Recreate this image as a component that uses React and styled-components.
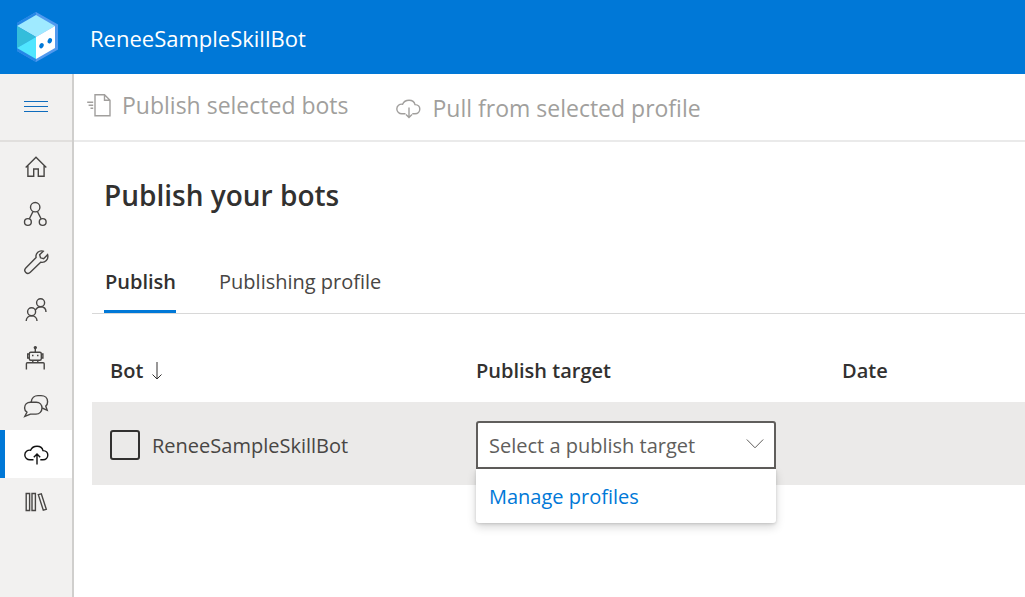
import React from "react";
import styled, { createGlobalStyle } from "styled-components";

const GlobalStyle = createGlobalStyle`
  *, *::before, *::after { box-sizing: border-box; }
  html, body, #root { height: 100%; }
  body {
    margin: 0;
    background: #fff;
    color: #323130;
    font-family: "Open Sans", "Noto Sans", sans-serif;
    font-size: 20px;
    line-height: 28px;
  }
  button, select, input { font: inherit; color: inherit; }
`;

const Shell = styled.div`
  display: flex;
  flex-direction: column;
  min-height: 100%;
  overflow-x: hidden;
`;

const Header = styled.header`
  display: flex;
  align-items: center;
  gap: 28px;
  height: 74px;
  padding: 0 12px;
  background: #0078d7;
  color: #fff;
`;

const ProjectName = styled.span`
  font-size: 22px;
  line-height: 32px;
  padding-top: 2px;
`;

const Body = styled.div`
  display: flex;
  flex: 1;
`;

const Sidebar = styled.nav`
  flex: none;
  width: 74px;
  background: #f2f1f0;
  border-right: 2px solid #d0cfcd;
`;

const MenuButton = styled.button`
  display: flex;
  align-items: center;
  justify-content: center;
  width: 100%;
  height: 68px;
  padding: 0 0 2px;
  border: 0;
  border-bottom: 2px solid #e1dfdd;
  background: none;
  color: #0f6cbd;
`;

const NavList = styled.ul`
  margin: 0;
  padding: 0;
  list-style: none;
`;

const NavLink = styled.a`
  display: flex;
  align-items: center;
  justify-content: center;
  height: 48px;
  padding-right: ${(p) => (p.$active ? "5px" : "0")};
  border-left: ${(p) => (p.$active ? "5px solid #0078d7" : "0")};
  background: ${(p) => (p.$active ? "#fff" : "transparent")};
  color: ${(p) => (p.$active ? "#111" : "#484644")};
`;

const Main = styled.main`
  flex: 1;
  min-width: 0;
`;

const Toolbar = styled.div`
  display: flex;
  align-items: center;
  gap: 46px;
  height: 68px;
  padding: 0 12px;
  border-bottom: 2px solid #eaeaea;
`;

const ToolbarButton = styled.button`
  display: flex;
  align-items: center;
  gap: ${(p) => (p.$wide ? "12px" : "10px")};
  padding: ${(p) => (p.$wide ? "2px 0 0" : "0 0 4px")};
  border: 0;
  background: none;
  color: #a19f9d;
  font-size: 23px;
  line-height: 32px;
  white-space: nowrap;
`;

const Title = styled.h1`
  margin: 0;
  padding: 33px 30px 0;
  font-size: 28px;
  line-height: 40px;
  font-weight: 600;
`;

const Content = styled.div`
  padding-left: 18px;
`;

const Tabs = styled.div`
  display: flex;
  gap: 42px;
  padding: 39px 12px 0;
  border-bottom: 1px solid #d8d8d8;
`;

const Tab = styled.button`
  padding: 14px 0 14px 1px;
  border: 0;
  border-bottom: 3px solid ${(p) => (p.$active ? "#0078d7" : "transparent")};
  background: none;
  font-weight: ${(p) => (p.$active ? 600 : 400)};
  color: ${(p) => (p.$active ? "#323130" : "#484644")};
`;

const Table = styled.table`
  width: 100%;
  margin-top: 26px;
  border-collapse: collapse;
  table-layout: fixed;
`;

const HeadCell = styled.th`
  width: ${(p) => (p.$fill ? "auto" : "366px")};
  height: 62px;
  padding: 0 18px;
  text-align: left;
  font-weight: 600;
  white-space: nowrap;
`;

const HeadLabel = styled.span`
  display: flex;
  align-items: center;
  gap: 8px;
`;

const Row = styled.tr`
  background: #ebeae9;
`;

const Cell = styled.td`
  padding: 19px 18px 16px;
`;

const BotLabel = styled.label`
  display: flex;
  align-items: center;
  gap: 12px;
  color: #484644;
`;

const BotName = styled.span`
  padding-top: 2px;
`;

const Checkbox = styled.input`
  appearance: none;
  flex: none;
  width: 30px;
  height: 30px;
  margin: 0;
  border: 2px solid #323130;
  border-radius: 3px;
`;

const Dropdown = styled.div`
  position: relative;
  width: 300px;
`;

const Select = styled.select`
  appearance: none;
  display: block;
  width: 100%;
  height: 48px;
  padding: 2px 44px 0 11px;
  border: 2px solid #605e5c;
  border-radius: 3px 3px 0 0;
  background: #fff;
  color: #605e5c;
`;

const Chevron = styled.svg`
  position: absolute;
  top: 17px;
  right: 12px;
  pointer-events: none;
  color: #605e5c;
`;

const Callout = styled.div`
  position: absolute;
  top: 100%;
  left: 0;
  right: 0;
  padding: 14px 13px 12px;
  border-radius: 0 0 3px 3px;
  background: #fff;
  box-shadow: 0 4px 10px rgba(0, 0, 0, 0.16), 0 1px 3px rgba(0, 0, 0, 0.14);
`;

const ProfileLink = styled.a`
  display: block;
  color: #0078d7;
  text-decoration: none;
`;

function Logo() {
  return (
    <svg width="50" height="50" viewBox="0 0 50 50" aria-hidden="true">
      <path d="M24 0 46 12.5v25L24 50 5 39V11Z" fill="#5199ee" />
      <path d="M24 0 5 11v28l19 11Z" fill="#2687e6" />
      <path d="M24 3 43 14 24 25 5 14Z" fill="#9feaff" />
      <path d="M5 14 24 25 5 36Z" fill="#34bddb" />
      <path d="M24 25v22L5 36Z" fill="#50e6ff" />
      <path d="M43 14v22L24 47V25Z" fill="#fff" />
      <ellipse cx="29.5" cy="33.7" rx="2.1" ry="2.7" transform="rotate(25 29.5 33.7)" fill="#0078d7" />
      <ellipse cx="37.8" cy="28.8" rx="2.1" ry="2.7" transform="rotate(25 37.8 28.8)" fill="#0078d7" />
    </svg>
  );
}

function Glyph({ children, width = 26, height = 26, stroke = 1.4 }) {
  return (
    <svg
      width={width}
      height={height}
      viewBox={`0 0 ${width} ${height}`}
      fill="none"
      stroke="currentColor"
      strokeWidth={stroke}
      aria-hidden="true"
    >
      {children}
    </svg>
  );
}

const cloud =
  "M10.5 18.8H7a5 5 0 0 1-5.200-4.800c0-3 2.600-5.200 5.800-4.800C8.600 6.800 11.200 5.200 14 5.200c3.200 0 5.500 1.900 6 4.400 3 .1 4.800 2 4.800 4.500 0 2.700-2 4.700-4.800 4.700h-2.700";

const navItems = [
  {
    name: "Home",
    icon: <path d="M2.700 14.400 13 4.300l10.300 10.100M4.900 12.500v10.700h5.800v-7.200h4.600v7.200h5.800V12.500" />,
  },
  {
    name: "Design",
    icon: (
      <>
        <circle cx="12.200" cy="6.200" r="4.700" />
        <circle cx="4.900" cy="21" r="3.400" />
        <circle cx="19.700" cy="21" r="3.400" />
        <path d="m10 10.500-3.600 7.300M14.400 10.500l3.700 7.300" />
      </>
    ),
  },
  {
    name: "Configure",
    icon: (
      <path d="M20.200 2.200c-4-1.300-8 2-7.100 6.400L2.800 18.900c-3 3.200 1.400 7.300 4.500 4.400l10.400-10.100c4.500.9 8.200-2.900 6.900-7.500l-4 4-3.100-.9-.9-3.100Z" />
    ),
  },
  {
    name: "User input",
    icon: (
      <>
        <circle cx="17.600" cy="5.700" r="4" />
        <circle cx="8.600" cy="14.700" r="4" />
        <path d="M3.200 24c0-3.200 2.300-5.300 5.400-5.300s5.400 2.100 5.400 5.300M12.300 13.200c1.300-2.300 3-3.500 5.300-3.500 3.200 0 5.400 2.100 5.400 5.300" />
      </>
    ),
  },
  {
    name: "Bot responses",
    icon: (
      <>
        <circle cx="12.300" cy="2.600" r="1" fill="currentColor" />
        <rect x="6.300" y="7.200" width="12" height="8" rx="1.500" />
        <path d="M12.300 3v4M6 9H4.700v4H6M18.600 9h1.300v4h-1.300M9.800 15.500v2.400M14.800 15.500v2.400M3.400 24.500v-5.800c0-.6.400-1 1-1h15.800c.6 0 1 .4 1 1v5.800" />
        <path d="M9 10.500h1.500M14 10.500h1.500" strokeWidth="1.500" />
      </>
    ),
  },
  {
    name: "Conversations",
    icon: (
      <>
        <path d="M8.200 9C8.600 5 11.500 2.600 15 2.600h3c4 0 6.600 2.500 6.600 6.100 0 2-.6 3.300-1.800 4.400l1.400 4.200-5-2.300" />
        <path d="M7.500 9.200h5.800c3.500 0 5.700 2.500 5.700 5.900s-2.500 6-6 6H7.400l-5.600 2.300 2.100-4.200c-1.500-1-2.300-2.500-2.300-4.300 0-3.300 2.500-5.700 5.900-5.700Z" />
      </>
    ),
  },
  {
    name: "Publish",
    active: true,
    icon: <path d={`${cloud}M14 23.500V13m-3.200 3.200L14 13l3.200 3.200`} />,
  },
  {
    name: "Package library",
    icon: <path d="M3.200 4.500h3.400v17H3.200ZM9 4.500h3.400v17H9ZM15.300 5.600l3-.8 5 15.500-3 .9Z" />,
  },
];

export default function App() {
  return (
    <Shell>
      <GlobalStyle />
      <Header>
        <Logo />
        <ProjectName>ReneeSampleSkillBot</ProjectName>
      </Header>
      <Body>
        <Sidebar aria-label="Main">
          <MenuButton type="button" aria-label="Toggle navigation">
            <Glyph stroke={1} width={24} height={13}>
              <path d="M0 1.500h24M0 6.500h24M0 11.500h24" />
            </Glyph>
          </MenuButton>
          <NavList>
            {navItems.map((item) => (
              <li key={item.name}>
                <NavLink
                  href={`#${item.name}`}
                  aria-label={item.name}
                  aria-current={item.active ? "page" : undefined}
                  $active={item.active}
                >
                  <Glyph>{item.icon}</Glyph>
                </NavLink>
              </li>
            ))}
          </NavList>
        </Sidebar>
        <Main>
          <Toolbar>
            <ToolbarButton type="button" disabled>
              <Glyph>
                <path d="M9 2.700h9.500l5.500 5.500v15.500H9ZM18.500 2.700v5.500H24M1.200 10.200h6M2.600 13.200h4.600M4.500 16.200h2.700" />
              </Glyph>
              Publish selected bots
            </ToolbarButton>
            <ToolbarButton type="button" disabled $wide>
              <Glyph>
                <path d={`${cloud}M14 12.500v10m-3-3 3 3 3-3`} />
              </Glyph>
              Pull from selected profile
            </ToolbarButton>
          </Toolbar>
          <Title>Publish your bots</Title>
          <Content>
            <Tabs role="tablist">
              <Tab type="button" role="tab" aria-selected="true" $active>
                Publish
              </Tab>
              <Tab type="button" role="tab" aria-selected="false">
                Publishing profile
              </Tab>
            </Tabs>
            <Table>
              <thead>
                <tr>
                  <HeadCell scope="col" aria-sort="descending">
                    <HeadLabel>
                      Bot
                      <Glyph width={12} height={20} stroke={1}>
                        <path d="M6 1v17M1.500 13.500 6 18l4.500-4.500" />
                      </Glyph>
                    </HeadLabel>
                  </HeadCell>
                  <HeadCell scope="col">Publish target</HeadCell>
                  <HeadCell scope="col" $fill>
                    Date
                  </HeadCell>
                </tr>
              </thead>
              <tbody>
                <Row>
                  <Cell>
                    <BotLabel>
                      <Checkbox type="checkbox" />
                      <BotName>ReneeSampleSkillBot</BotName>
                    </BotLabel>
                  </Cell>
                  <Cell>
                    <Dropdown>
                      <Select aria-label="Publish target" defaultValue="">
                        <option value="">Select a publish target</option>
                      </Select>
                      <Chevron width="18" height="12" viewBox="0 0 18 12" fill="none" stroke="currentColor" strokeWidth="1" aria-hidden="true">
                        <path d="m.8 1.500 8.200 8.300 8.200-8.300" />
                      </Chevron>
                      <Callout>
                        <ProfileLink href="#profiles">Manage profiles</ProfileLink>
                      </Callout>
                    </Dropdown>
                  </Cell>
                  <Cell />
                </Row>
              </tbody>
            </Table>
          </Content>
        </Main>
      </Body>
    </Shell>
  );
}
